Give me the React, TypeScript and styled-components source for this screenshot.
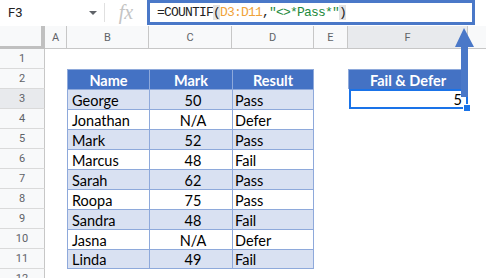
import React from "react";
import styled, { createGlobalStyle } from "styled-components";

const GlobalStyle = createGlobalStyle`
  html, body { margin: 0; padding: 0; background: #fff; }
  body { font-family: Roboto, "Liberation Sans", Arial, sans-serif; }
`;

const students = [
  { name: "George", mark: "50", result: "Pass" },
  { name: "Jonathan", mark: "N/A", result: "Defer" },
  { name: "Mark", mark: "52", result: "Pass" },
  { name: "Marcus", mark: "48", result: "Fail" },
  { name: "Sarah", mark: "62", result: "Pass" },
  { name: "Roopa", mark: "75", result: "Pass" },
  { name: "Sandra", mark: "48", result: "Fail" },
  { name: "Jasna", mark: "N/A", result: "Defer" },
  { name: "Linda", mark: "49", result: "Fail" },
];

const columns = ["A", "B", "C", "D", "E", "F", ""];

export default function App() {
  return (
    <Page>
      <GlobalStyle />
      <FormulaBar>
        <NameBox>
          F3
          <Caret />
        </NameBox>
        <Divider />
        <FxLabel>fx</FxLabel>
        <FormulaInput>
          =COUNTIF<Paren>(</Paren>
          <Ref>D3:D11</Ref>,<Str>"&lt;&gt;*Pass*"</Str>
          <Paren>)</Paren>
        </FormulaInput>
      </FormulaBar>

      <Sheet>
        <Corner />
        {columns.map((c, i) => (
          <ColHead key={i} $active={c === "F"} $last={i === columns.length - 1}>
            {c}
          </ColHead>
        ))}

        {Array.from({ length: 12 }).map((_, r) => {
          const rowNum = r + 1;
          const student = r >= 2 ? students[r - 2] : undefined;
          return (
            <React.Fragment key={rowNum}>
              <RowHead $active={rowNum === 3}>{rowNum}</RowHead>
              <Blank />
              {rowNum === 2 ? (
                <>
                  <HeadCell>Name</HeadCell>
                  <HeadCell>Mark</HeadCell>
                  <HeadCell $right>Result</HeadCell>
                </>
              ) : student ? (
                <>
                  <DataCell $shade={r % 2 === 0} $last={rowNum === 11}>
                    {student.name}
                  </DataCell>
                  <DataCell $shade={r % 2 === 0} $last={rowNum === 11} $center>
                    {student.mark}
                  </DataCell>
                  <DataCell $shade={r % 2 === 0} $last={rowNum === 11} $right $tight>
                    {student.result}
                  </DataCell>
                </>
              ) : (
                <>
                  <Blank />
                  <Blank />
                  <Blank />
                </>
              )}
              <Blank />
              {rowNum === 2 ? (
                <SummaryHead>Fail &amp; Defer</SummaryHead>
              ) : rowNum === 3 ? (
                <SelectedCell>
                  5
                  <Handle />
                </SelectedCell>
              ) : (
                <Blank />
              )}
              <Blank />
            </React.Fragment>
          );
        })}
      </Sheet>

      <Arrow width="30" height="72" viewBox="0 0 30 72">
        <path d="M14 0 L24 19 L18 19 L18 69 L11 69 L11 19 L5 19 Z" fill="#4a78c8" />
      </Arrow>
    </Page>
  );
}

const Page = styled.div`
  position: relative;
  width: 486px;
  height: 278px;
  overflow: hidden;
  background: #fff;
`;

const FormulaBar = styled.div`
  display: flex;
  height: 26px;
  align-items: stretch;
  background: #fff;
`;

const NameBox = styled.div`
  width: 104px;
  box-sizing: border-box;
  display: flex;
  align-items: center;
  justify-content: space-between;
  padding: 0 7px 1px 8px;
  font-size: 13px;
  color: #222;
`;

const Caret = styled.span`
  width: 0;
  height: 0;
  border-left: 4px solid transparent;
  border-right: 4px solid transparent;
  border-top: 4px solid #5f6368;
`;

const Divider = styled.div`
  width: 1px;
  background: #e0e0e0;
  margin: 3px 0 4px;
`;

const FxLabel = styled.div`
  width: 42px;
  display: flex;
  align-items: center;
  justify-content: center;
  font-family: "Liberation Serif", serif;
  font-style: italic;
  font-size: 20px;
  color: #c4c4c4;
  padding-bottom: 2px;
`;

const FormulaInput = styled.div`
  flex: 1;
  margin-right: 11px;
  margin-bottom: 1px;
  border: 3px solid #4a78c8;
  display: flex;
  align-items: center;
  padding-left: 7px;
  font-family: "Liberation Mono", monospace;
  font-size: 13px;
  letter-spacing: -0.8px;
  color: #222;
  white-space: pre;
`;

const Paren = styled.span`
  background: #e3e3e3;
`;

const Ref = styled.span`
  color: #f0a33a;
`;

const Str = styled.span`
  color: #1e8a3c;
`;

const Sheet = styled.div`
  display: grid;
  grid-template-columns: 45px 22px 82px 83px 82px 34px 120px 18px;
  grid-template-rows: 23px repeat(12, 20px);
`;

const Corner = styled.div`
  box-sizing: border-box;
  background: #f8f9fa;
  border-right: 4px solid #c0c0c0;
  border-bottom: 3px solid #c0c0c0;
`;

const ColHead = styled.div<{ $active?: boolean; $last?: boolean }>`
  box-sizing: border-box;
  display: flex;
  align-items: center;
  justify-content: center;
  font-size: 11px;
  color: #5f6368;
  background: ${(p) => (p.$active ? "#e8eaed" : "#f8f9fa")};
  border-right: ${(p) => (p.$last ? "none" : "1px solid #c7c7c7")};
  border-bottom: 1px solid #c7c7c7;
  padding-top: 1px;
`;

const RowHead = styled.div<{ $active?: boolean }>`
  box-sizing: border-box;
  display: flex;
  align-items: center;
  justify-content: center;
  font-size: 11px;
  color: #5f6368;
  background: ${(p) => (p.$active ? "#e8eaed" : "#f8f9fa")};
  border-right: 1px solid #c7c7c7;
  border-bottom: 1px solid #dadada;
`;

const Blank = styled.div`
  background: #fff;
`;

const TableFont = `
  font-family: Lato, "Open Sans", sans-serif;
  font-size: 14.5px;
  color: #000;
`;

const HeadCell = styled.div<{ $right?: boolean }>`
  ${TableFont}
  box-sizing: border-box;
  display: flex;
  align-items: center;
  justify-content: center;
  background: #4472c4;
  color: #fff;
  font-weight: 700;
  border-left: 1px solid #8ea9db;
  border-top: 1px solid #8ea9db;
  border-right: ${(p) => (p.$right ? "1px solid #8ea9db" : "none")};
  padding-top: 1px;
`;

const DataCell = styled.div<{
  $shade?: boolean;
  $last?: boolean;
  $center?: boolean;
  $right?: boolean;
  $tight?: boolean;
}>`
  ${TableFont}
  box-sizing: border-box;
  display: flex;
  align-items: center;
  justify-content: ${(p) => (p.$center ? "center" : "flex-start")};
  padding: 1px 0 0 ${(p) => (p.$tight ? "2px" : "4px")};
  background: ${(p) => (p.$shade ? "#d9e1f2" : "#fff")};
  border-left: 1px solid #8ea9db;
  border-top: 1px solid #8ea9db;
  border-right: ${(p) => (p.$right ? "1px solid #8ea9db" : "none")};
  border-bottom: ${(p) => (p.$last ? "1px solid #8ea9db" : "none")};
`;

const SummaryHead = styled.div`
  ${TableFont}
  box-sizing: border-box;
  display: flex;
  align-items: center;
  justify-content: center;
  background: #4472c4;
  color: #fff;
  font-weight: 700;
  border: 1px solid #8ea9db;
  border-bottom: none;
  padding-top: 1px;
`;

const SelectedCell = styled.div`
  ${TableFont}
  position: relative;
  box-sizing: border-box;
  display: flex;
  align-items: center;
  justify-content: flex-end;
  padding: 1px 4px 0 0;
  border: 2px solid #1a73e8;
  margin-left: 1px;
`;

const Handle = styled.span`
  position: absolute;
  right: -5px;
  bottom: -5px;
  width: 6px;
  height: 6px;
  background: #1a73e8;
  border: 1px solid #fff;
`;

const Arrow = styled.svg`
  position: absolute;
  left: 450px;
  top: 28px;
`;
